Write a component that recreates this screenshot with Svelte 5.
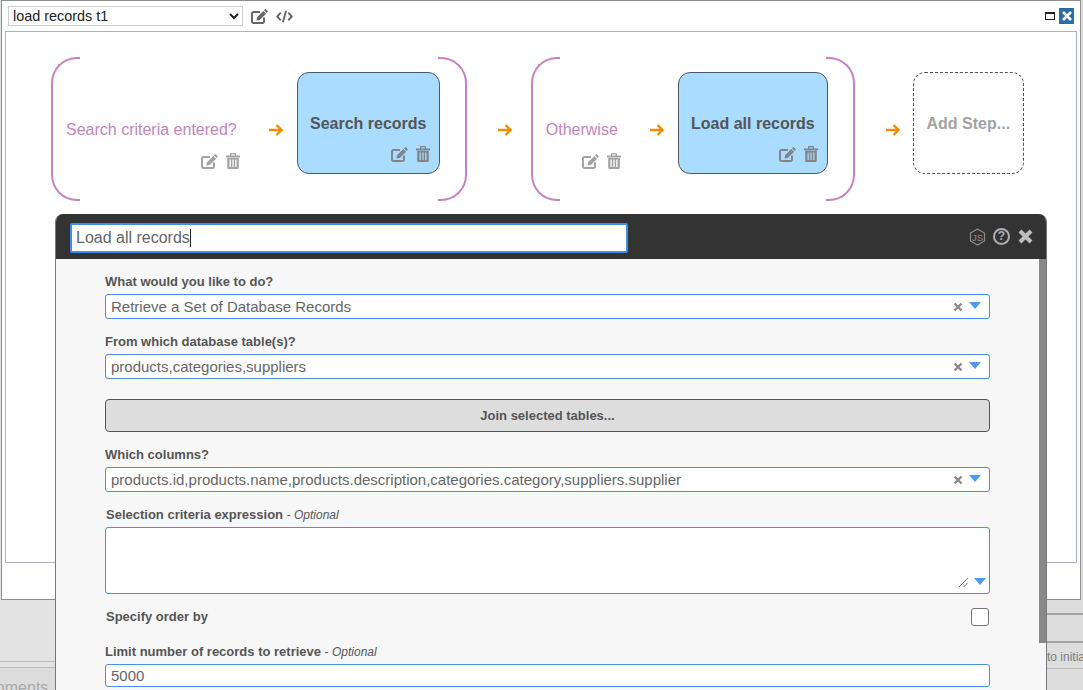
<script>
  const topFields = [
    { label: "What would you like to do?", value: "Retrieve a Set of Database Records" },
    { label: "From which database table(s)?", value: "products,categories,suppliers" }
  ];
  const columns = "products.id,products.name,products.description,categories.category,suppliers.supplier";
</script>

{#snippet editIcon()}
  <svg class="ico-edit" viewBox="0 0 17 15" aria-hidden="true">
    <path d="M13 8.500v4a1.500 1.500 0 0 1-1.500 1.500h-9A1.500 1.500 0 0 1 1 12.500v-8A1.500 1.500 0 0 1 2.500 3H9" fill="none" stroke="currentColor" stroke-width="2" />
    <path d="M5.500 11.500 6 8.200 12.300 2l2.800 2.800-6.300 6.200zM13 1.300l1-1c.3-.3.7-.3 1 0l1.600 1.600c.3.3.3.7 0 1l-1 1z" fill="currentColor" />
  </svg>
{/snippet}

{#snippet trashIcon()}
  <svg class="ico-trash" viewBox="0 0 14 16" aria-hidden="true">
    <path d="M0 2.600h4V1.200C4 .5 4.500 0 5.200 0h3.600C9.500 0 10 .5 10 1.200V2.600h4V4.400H0zM5.300 2.600h3.400V1.300H5.300z" fill="currentColor" fill-rule="evenodd" />
    <path d="M1.200 5h11.600v9.400c0 .9-.7 1.600-1.600 1.600H2.800c-.9 0-1.600-.7-1.600-1.600zM3.500 6.500v7.500h1.300V6.500zM6.350 6.500v7.500h1.300V6.500zM9.200 6.500v7.500h1.300V6.500z" fill="currentColor" fill-rule="evenodd" />
  </svg>
{/snippet}

{#snippet arrow()}
  <svg class="ico-arrow" viewBox="0 0 14 12" aria-hidden="true">
    <path d="M0 6h11.500M7.500 1l5 5-5 5" fill="none" stroke="currentColor" stroke-width="2.300" />
  </svg>
{/snippet}

{#snippet comboControls()}
  <svg class="ico-clear" viewBox="0 0 10 10" aria-hidden="true">
    <path d="M1.500 1.500l7 7M8.500 1.500l-7 7" fill="none" stroke="currentColor" stroke-width="2.400" />
  </svg>
  <span class="caret-down"></span>
{/snippet}

<div class="backdrop">
  <div class="back-left">
    <div class="back-left-top"></div>
    <div class="back-left-gap"></div>
    <div class="back-left-text">Comments</div>
  </div>
  <div></div>
  <div class="back-right">
    <div class="back-right-a"></div>
    <div class="back-right-b"></div>
    <div class="back-right-c">to initiate</div>
  </div>
</div>

<div class="window">
  <div class="toolbar">
    <select class="flow-select">
      <option>load records t1</option>
    </select>
    <span class="tool-edit">{@render editIcon()}</span>
    <svg class="ico-code" viewBox="0 0 18 13" aria-hidden="true">
      <path d="M5 2.500 1.300 6.500 5 10.500M13 2.500l3.700 4-3.700 4M10.700.5 7.300 12.500" fill="none" stroke="currentColor" stroke-width="2" />
    </svg>
    <span class="win-max"></span>
    <span class="win-close">
      <svg viewBox="0 0 10 10" aria-hidden="true">
        <path d="M1 1l8 8M9 1l-8 8" fill="none" stroke="#fff" stroke-width="2.600" />
      </svg>
    </span>
  </div>

  <div class="canvas">
    <div class="bracket">
      <div class="condition">
        <div class="cond-text">Search criteria entered?</div>
        <div class="cond-icons">{@render editIcon()}{@render trashIcon()}</div>
      </div>
      <div class="arrow inner">{@render arrow()}</div>
      <div class="step first">
        <div class="step-title">Search records</div>
        <div class="step-icons">{@render editIcon()}{@render trashIcon()}</div>
      </div>
    </div>
    <div class="arrow between">{@render arrow()}</div>
    <div class="bracket">
      <div class="condition">
        <div class="cond-text">Otherwise</div>
        <div class="cond-icons">{@render editIcon()}{@render trashIcon()}</div>
      </div>
      <div class="arrow inner">{@render arrow()}</div>
      <div class="step second">
        <div class="step-title">Load all records</div>
        <div class="step-icons">{@render editIcon()}{@render trashIcon()}</div>
      </div>
    </div>
    <div class="arrow last">{@render arrow()}</div>
    <div class="add-step">Add Step...</div>
  </div>
</div>

<div class="modal">
  <div class="modal-header">
    <div class="title-input">Load all records<span class="text-caret"></span></div>
    <div class="header-icons">
      <svg class="ico-js" viewBox="0 0 17 18" aria-hidden="true">
        <path d="M8.500 1 15.500 5v8l-7 4-7-4V5z" fill="none" stroke="currentColor" stroke-width="1.200" />
        <text x="8.500" y="12.500" text-anchor="middle" font-size="9.500" font-family="Liberation Sans, sans-serif" fill="currentColor">JS</text>
      </svg>
      <span class="ico-help">?</span>
      <svg class="ico-x" viewBox="0 0 15 15" aria-hidden="true">
        <path d="M2 2l11 11M13 2 2 13" fill="none" stroke="currentColor" stroke-width="4" />
      </svg>
    </div>
  </div>

  <div class="modal-body">
    {#each topFields as field}
      <div class="group">
        <div class="label">{field.label}</div>
        <div class="combo"><span class="combo-value">{field.value}</span>{@render comboControls()}</div>
      </div>
    {/each}

    <button class="join">Join selected tables...</button>

    <div class="group">
      <div class="label">Which columns?</div>
      <div class="combo"><span class="combo-value">{columns}</span>{@render comboControls()}</div>
    </div>

    <div class="group">
      <div class="label indent">Selection criteria expression <span class="optional">- <em>Optional</em></span></div>
      <div class="area-wrap">
        <textarea class="area"></textarea>
        <svg class="area-grip" viewBox="0 0 9 9" aria-hidden="true">
          <path d="M0 9 9 0M4.500 9 9 4.500" fill="none" stroke="#777" stroke-width="1" />
        </svg>
        <span class="caret-down on-area"></span>
      </div>
    </div>

    <div class="order-row">
      <span class="label indent">Specify order by</span>
      <span class="checkbox"></span>
    </div>

    <div class="group limit">
      <div class="label">Limit number of records to retrieve <span class="optional">- <em>Optional</em></span></div>
      <input class="text-input" value="5000" />
    </div>
  </div>

  <div class="scrollbar"></div>
</div>

<style>
  :global(body) {
    margin: 0;
    height: 690px;
    overflow: hidden;
    background: #eeeeee;
    font-family: "Liberation Sans", Arial, sans-serif;
  }

  .backdrop {
    display: grid;
    grid-template-columns: 55px 1fr 36px;
    height: 690px;
    overflow: hidden;
  }

  .back-left-top {
    height: 662px;
    box-sizing: border-box;
    background: #e3e3e3;
    border-bottom: 1px solid #bdbdbd;
  }

  .back-left-gap {
    height: 5px;
    background: #e3e3e3;
    border-bottom: 1px solid #bdbdbd;
  }

  .back-left-text {
    height: 22px;
    background: #dcdcdc;
    color: #a8a8a8;
    font-size: 16px;
    line-height: 40px;
    white-space: nowrap;
    overflow: hidden;
    text-indent: -29px;
  }

  .back-right-a {
    height: 615px;
    box-sizing: border-box;
    background: #dddddd;
    border-bottom: 2px solid #a3a3a3;
  }

  .back-right-b {
    height: 28px;
    box-sizing: border-box;
    background: #dddddd;
    border-bottom: 2px solid #a3a3a3;
  }

  .back-right-c {
    height: 47px;
    box-sizing: border-box;
    padding-top: 7px;
    background: linear-gradient(#dddddd 25px, #bdbdbd 25px, #bdbdbd 26px, #dddddd 26px);
    color: #7d7d7d;
    font-size: 12px;
    white-space: nowrap;
    overflow: hidden;
  }

  .window {
    position: absolute;
    left: 1px;
    top: 0;
    width: 1080px;
    height: 600px;
    box-sizing: border-box;
    background: #fff;
    border: 1px solid #8d8d8d;
    padding: 0 3px;
  }

  .toolbar {
    display: flex;
    align-items: center;
    height: 30px;
    color: #666;
  }

  .flow-select {
    width: 235px;
    height: 20px;
    margin: 0 0 0 3px;
    padding: 0;
    box-sizing: border-box;
    background: #fff;
    border: 1px solid #cfcfcf;
    border-radius: 0;
    color: #222;
    font-family: inherit;
    font-size: 14.4px;
  }

  .tool-edit {
    display: flex;
    margin-left: 8px;
    width: 17px;
  }

  .ico-edit {
    width: 17px;
    height: 15px;
    display: block;
  }

  .ico-trash {
    width: 14px;
    height: 16px;
    display: block;
  }

  .ico-code {
    width: 17px;
    height: 13px;
    margin-left: 8px;
  }

  .win-max {
    width: 8px;
    height: 5px;
    margin-left: auto;
    border: 1px solid #222;
    border-top-width: 2px;
  }

  .win-close {
    display: flex;
    align-items: center;
    justify-content: center;
    width: 15px;
    height: 16px;
    margin: 0 3px 0 4px;
    background: #2a6ca3;
  }

  .win-close svg {
    width: 10px;
    height: 10px;
  }

  .canvas {
    display: flex;
    align-items: flex-start;
    height: 532px;
    box-sizing: border-box;
    padding: 25px 0 0 45px;
    border: 1px solid #aab4c0;
  }

  .bracket {
    position: relative;
    display: flex;
    align-items: flex-start;
    height: 144px;
    padding-left: 14px;
  }

  .bracket::before,
  .bracket::after {
    content: "";
    position: absolute;
    top: 0;
    bottom: 0;
    width: 27px;
    border: 2px solid #c583c1;
  }

  .bracket::before {
    left: 0;
    border-right: none;
    border-radius: 26px 0 0 26px;
  }

  .bracket::after {
    right: 0;
    border-left: none;
    border-radius: 0 26px 26px 0;
  }

  .condition {
    margin-top: 64px;
    padding-left: 1px;
  }

  .cond-text {
    color: #c583c1;
    font-size: 16px;
    line-height: 18px;
    padding-right: 3px;
    white-space: nowrap;
  }

  .cond-icons {
    display: flex;
    justify-content: flex-end;
    align-items: center;
    gap: 8px;
    margin-top: 14px;
    color: #a3a3a3;
  }

  .arrow {
    display: flex;
    color: #f28a00;
  }

  .ico-arrow {
    width: 14px;
    height: 12px;
  }

  .arrow.inner {
    margin: 67px 14px 0 29px;
  }

  .arrow.between {
    margin: 67px 19px 0 31px;
  }

  .arrow.last {
    margin: 67px 13px 0 31px;
  }

  .step {
    display: flex;
    flex-direction: column;
    align-items: center;
    height: 102px;
    box-sizing: border-box;
    margin: 15px 27px 0 0;
    padding-top: 42px;
    background: #a9dcff;
    border: 1px solid #52585f;
    border-radius: 12px;
  }

  .step.first {
    width: 143px;
  }

  .step.second {
    width: 150px;
  }

  .step-title {
    color: #555;
    font-size: 16px;
    font-weight: 700;
    line-height: 18px;
    white-space: nowrap;
  }

  .step-icons {
    display: flex;
    align-items: center;
    align-self: flex-end;
    gap: 8px;
    margin: 13px 9px 0 0;
    color: #808587;
  }

  .add-step {
    width: 111px;
    height: 102px;
    box-sizing: border-box;
    margin-top: 15px;
    padding-top: 42px;
    border: 1px dashed #555;
    border-radius: 12px;
    color: #a3a3a3;
    font-size: 16px;
    font-weight: 700;
    line-height: 18px;
    text-align: center;
  }

  .modal {
    position: absolute;
    left: 55px;
    top: 214px;
    width: 992px;
    height: 476px;
    box-sizing: border-box;
    overflow: hidden;
    background: #f7f7f7;
    border-left: 1px solid #777;
    border-right: 1px solid #777;
    border-radius: 8px 8px 0 0;
  }

  .modal-header {
    display: flex;
    align-items: center;
    justify-content: space-between;
    height: 45px;
    box-sizing: border-box;
    padding: 0 13px 0 14px;
    background: #333;
  }

  .title-input {
    width: 558px;
    height: 30px;
    box-sizing: border-box;
    margin-top: 2px;
    padding-left: 4px;
    background: #fff;
    border: 2px solid #3f8fe8;
    border-radius: 2px;
    color: #666;
    font-size: 16px;
    line-height: 25px;
  }

  .text-caret {
    display: inline-block;
    width: 1px;
    height: 18px;
    background: #222;
    vertical-align: -4px;
  }

  .header-icons {
    display: flex;
    align-items: center;
    gap: 7px;
    color: #a8a8a8;
  }

  .ico-js {
    width: 17px;
    height: 18px;
    color: #8c8c8c;
  }

  .ico-help {
    width: 13px;
    height: 13px;
    border: 2px solid #b0b0b0;
    border-radius: 50%;
    color: #b0b0b0;
    font-size: 12px;
    font-weight: 700;
    line-height: 13px;
    text-align: center;
  }

  .ico-x {
    width: 15px;
    height: 15px;
    margin-left: 1px;
    color: #bdbdbd;
  }

  .modal-body {
    padding: 14px 56px 0 49px;
  }

  .group {
    margin-bottom: 14px;
  }

  .label {
    margin-bottom: 4px;
    padding-top: 1px;
    color: #555;
    font-size: 13px;
    font-weight: 700;
    line-height: 16px;
  }

  .label.indent {
    margin-left: 1px;
  }

  .optional {
    font-size: 12px;
    font-weight: 400;
  }

  .combo {
    display: flex;
    align-items: center;
    height: 25px;
    box-sizing: border-box;
    padding: 0 6px 0 5px;
    background: #fff;
    border: 1px solid #4a90e2;
    border-radius: 3px;
    color: #666;
    font-size: 15px;
  }

  .combo-value {
    flex: 1;
    white-space: nowrap;
  }

  .ico-clear {
    width: 10px;
    height: 10px;
    margin-right: 6px;
    color: #8a8a8a;
  }

  .caret-down {
    width: 0;
    height: 0;
    margin: -2px 2px 0 0;
    border-left: 6.500px solid transparent;
    border-right: 6.500px solid transparent;
    border-top: 7px solid #4a9bf5;
  }

  .join {
    display: block;
    width: 100%;
    height: 33px;
    margin: 20px 0 14px;
    padding: 0;
    background: #dddddd;
    border: 1px solid #555;
    border-radius: 4px;
    color: #555;
    font-family: inherit;
    font-size: 13px;
    font-weight: 700;
  }

  .area-wrap {
    position: relative;
  }

  .area {
    display: block;
    width: 100%;
    height: 67px;
    box-sizing: border-box;
    margin: 0;
    background: #fff;
    border: 1px solid #4a90e2;
    border-radius: 3px;
    resize: none;
  }

  .area-grip {
    position: absolute;
    right: 22px;
    bottom: 7px;
    width: 9px;
    height: 9px;
  }

  .on-area {
    position: absolute;
    right: 4px;
    bottom: 9px;
    margin: 0;
  }

  .order-row {
    display: flex;
    align-items: center;
    justify-content: space-between;
    height: 18px;
    padding-right: 1px;
  }

  .order-row .label {
    margin-bottom: 0;
    padding-top: 0;
  }

  .checkbox {
    width: 18px;
    height: 18px;
    box-sizing: border-box;
    background: #fff;
    border: 1px solid #777;
    border-radius: 3px;
  }

  .limit {
    margin-top: 17px;
  }

  .text-input {
    display: block;
    width: 100%;
    height: 23px;
    box-sizing: border-box;
    padding: 0 5px;
    background: #fff;
    border: 1px solid #4a90e2;
    border-radius: 3px;
    color: #666;
    font-family: inherit;
    font-size: 15px;
  }

  .scrollbar {
    position: absolute;
    top: 45px;
    right: 0;
    width: 7px;
    height: 384px;
    background: #888;
  }
</style>
